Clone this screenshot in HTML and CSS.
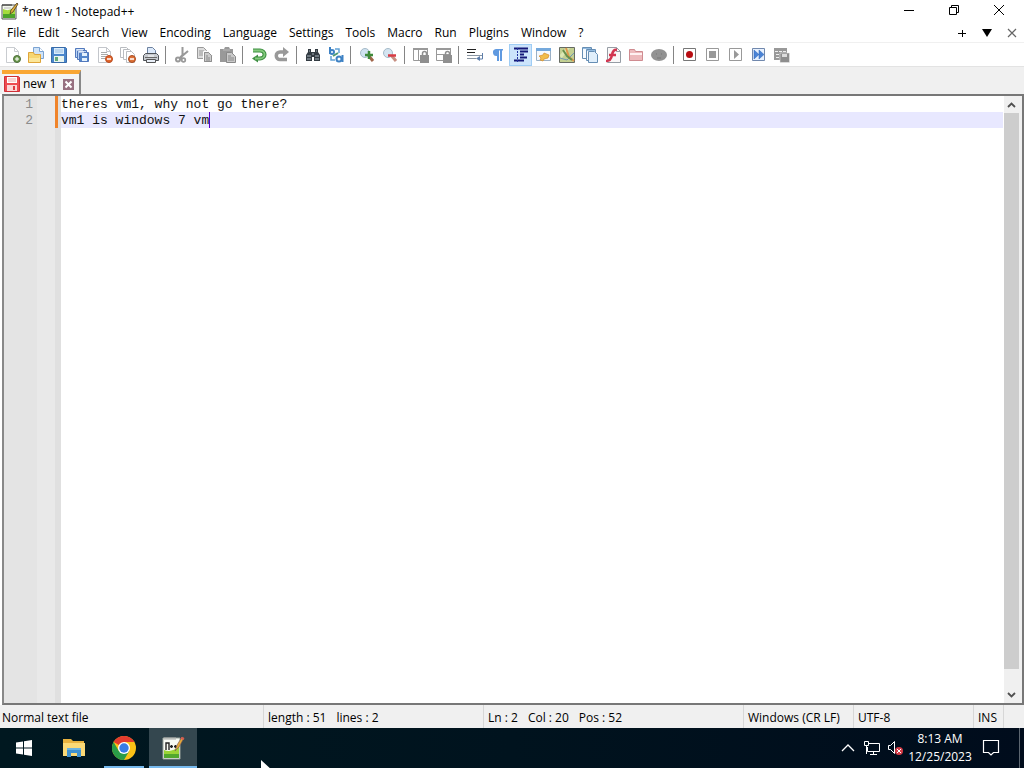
FILE: index.html
```
<!DOCTYPE html>
<html lang="en">
<head>
    <meta charset="UTF-8">
    <meta name="viewport" content="width=device-width, initial-scale=1.0">
    <title>*new 1 - Notepad++</title>
    <link rel="stylesheet" href="styles.css">
</head>
<body>
    <div class="window">
        <header class="titlebar">
            <svg class="app-icon" width="18" height="18" viewBox="0 0 18 18"><path d="M1 3h14v14H1z" fill="#f4f8ee" stroke="#555"/><path d="M2 7q6 3 12-2v11H2z" fill="#a5dc3c"/><path d="M2 12h12v4H2z" fill="#4da32a"/><path d="M2 2v2M4 2v2M6 2v2M8 2v2M10 2v2" stroke="#333"/><path d="M3 6h7" stroke="#bbb"/><path d="M9 12l1-4 6-7 1 1-5 8z" fill="#e5b23c" stroke="#4b3b20" stroke-width=".8"/></svg>
            <span class="title">*new 1 - Notepad++</span>
            <div class="window-buttons">
                <button aria-label="Minimize"><svg width="12" height="12" viewBox="0 0 12 12"><path d="M1 6.500h10" stroke="#000"/></svg></button>
                <button aria-label="Restore"><svg width="12" height="12" viewBox="0 0 12 12"><path d="M1.500 3.500h7v7h-7zM3.500 3.500v-2h7v7h-2" fill="none" stroke="#000"/></svg></button>
                <button aria-label="Close"><svg width="12" height="12" viewBox="0 0 12 12"><path d="M1 1l10 10M11 1L1 11" stroke="#000"/></svg></button>
            </div>
        </header>

        <nav class="menubar">
            <button>File</button>
            <button>Edit</button>
            <button>Search</button>
            <button>View</button>
            <button>Encoding</button>
            <button>Language</button>
            <button>Settings</button>
            <button>Tools</button>
            <button>Macro</button>
            <button>Run</button>
            <button>Plugins</button>
            <button>Window</button>
            <button>?</button>
            <div class="menu-right">
                <button aria-label="New tab"><svg width="10" height="10" viewBox="0 0 10 10"><path d="M1 5.500h8M5.500 2v7" stroke="#000"/></svg></button>
                <button aria-label="Tab list"><svg width="10" height="10" viewBox="0 0 10 10"><path d="M0 1h10L5 9z"/></svg></button>
                <button aria-label="Close tab"><svg width="10" height="10" viewBox="0 0 10 10"><path d="M1 1l8 8M9 1L1 9" stroke="#666" stroke-width="1.200"/></svg></button>
            </div>
        </nav>

        <div class="toolbar">
            <button aria-label="New"><svg viewBox="0 0 16 16"><path d="M1.500 .5h8l4 4v11h-12z" fill="#fff" stroke="#c9ccd0"/><path d="M9.500 .5v4h4" fill="none" stroke="#c9ccd0"/><circle cx="12" cy="12" r="3.500" fill="#6b9a4d" stroke="#4d6e3a"/><path d="M10 12h4M12 10v4" stroke="#fff"/></svg></button>
            <button aria-label="Open"><svg viewBox="0 0 16 16"><path d="M5.500 .5h6l4 4v7h-10z" fill="#cfe3f8" stroke="#7ba3d2"/><path d="M11.500 .5v4h4" fill="#fff" stroke="#7ba3d2"/><path d="M.5 5.500h5l1 2h6v8H.5z" fill="#f6d672" stroke="#dfa53a"/><path d="M1 11h10l1-2v6H1z" fill="#fbe69a"/></svg></button>
            <button aria-label="Save"><svg viewBox="0 0 16 16"><path d="M.5 .5h14l1 1v14H.5z" fill="#4b87cc" stroke="#376ba9"/><path d="M3 1h10v6H3z" fill="#d9ecfb"/><path d="M4 3h8M4 5h8" stroke="#99bde0"/><path d="M3 9h10v6H3z" fill="#eaf5ef"/><path d="M4 10h3v4H4z" fill="#62a879"/></svg></button>
            <button aria-label="Save All"><svg viewBox="0 0 16 16"><g fill="#b9d3f3" stroke="#5279bd"><path d="M1.500 1.500h9v9h-9z"/><path d="M3.500 3.500h9v9h-9z"/><path d="M5.500 5.500h9v9h-9z" fill="#5587cb"/></g><path d="M8 6h5v3H8zM8 11h5v3H8z" fill="#e5f2fc"/><path d="M3 3h6M5 5h5" stroke="#fff"/></svg></button>
            <button aria-label="Close"><svg viewBox="0 0 16 16"><path d="M1.500 .5h8l4 4v11h-12z" fill="#fff" stroke="#c3c6cb"/><path d="M9.500 .5v4h4" fill="none" stroke="#c3c6cb"/><path d="M4 5.500h6M4 7.500h7M4 9.500h5M4 11.500h4" stroke="#aaa"/><circle cx="12" cy="12" r="3.500" fill="#e2662d" stroke="#b94c20"/><path d="M10 12h4" stroke="#fff" stroke-width="1.500"/></svg></button>
            <button aria-label="Close All"><svg viewBox="0 0 16 16"><g fill="#fff" stroke="#b9bcc0"><path d="M.5 .5h6l2 2v8h-8z"/><path d="M3.500 2.500h6l2 2v8h-8z"/><path d="M6.500 4.500h5l3 3v8h-8z"/></g><circle cx="12" cy="12" r="3.500" fill="#dd7137" stroke="#a84b20"/><path d="M10 12h4" stroke="#fff" stroke-width="1.500"/></svg></button>
            <button aria-label="Print"><svg viewBox="0 0 16 16"><path d="M4.500 7V.5h5l3 3V7z" fill="#dce9fa" stroke="#6d82a0"/><path d="M.5 8.500l2-2h11l2 2v5H.5z" fill="#c6cacf" stroke="#4f5358"/><path d="M2 10.500h12" stroke="#666"/><path d="M3.500 12.500h9v3h-9z" fill="#e8eef7" stroke="#555"/><path d="M5 9h6" stroke="#fff"/></svg></button>
            <i class="separator"></i>
            <button aria-label="Cut" disabled><svg viewBox="0 0 16 16"><path d="M8.500 0v8L5 12M14 4L7 10l2 3" fill="none" stroke="#999" stroke-width="2"/><circle cx="4" cy="12.500" r="2" fill="#fff" stroke="#999" stroke-width="2"/><circle cx="9.500" cy="13" r="1.800" fill="#fff" stroke="#999" stroke-width="1.700"/></svg></button>
            <button aria-label="Copy" disabled><svg viewBox="0 0 16 16"><path d="M.5 .5h6l3 3v8h-9z" fill="#ddd" stroke="#999"/><path d="M2 4h5M2 6h5M2 8h4" stroke="#999"/><path d="M6.500 4.500h5l4 4v7h-9z" fill="#aaa" stroke="#fff"/><path d="M7.500 5.500h4l3 3v6h-7z" fill="#ccc" stroke="#8e8e8e"/><path d="M9 9h2M9 11h4M9 13h4" stroke="#888"/></svg></button>
            <button aria-label="Paste" disabled><svg viewBox="0 0 16 16"><path d="M0 2h4l1-2h4l1 2h3v13H0z" fill="#999"/><path d="M3 3h7" stroke="#bbb"/><path d="M6.500 5.500h5l4 4v6h-9z" fill="#c9c9c9" stroke="#888"/><path d="M8 9h3M8 11h6M8 13h6" stroke="#888"/></svg></button>
            <i class="separator"></i>
            <button aria-label="Undo"><svg viewBox="0 0 16 16"><path d="M2 3.500h7a4 3.500 0 0 1 0 8H6" fill="none" stroke="#3f8f43" stroke-width="4"/><path d="M7 7.500v8L1 11.500z" fill="#3f8f43"/><path d="M2 3.500h7a4 3.500 0 0 1 0 8H4" fill="none" stroke="#83ca7c" stroke-width="1.800"/></svg></button>
            <button aria-label="Redo" disabled><svg viewBox="0 0 16 16"><path d="M11 5H6a3.500 3.500 0 0 0 0 7.500h7" fill="none" stroke="#999" stroke-width="3.500"/><path d="M9 0l6 5-6 5z" fill="#999"/></svg></button>
            <i class="separator"></i>
            <button aria-label="Find"><svg viewBox="0 0 16 16"><path d="M3 2h3v3h4V2h3v3l2 3v6H9v-4H7v4H1V8l2-3z" fill="#333b42"/><path d="M2 9h4M10 9h4M2 12h4M10 12h4M7 7h2M4 4h1M11 4h1" stroke="#a9b5bd"/></svg></button>
            <button aria-label="Replace"><svg viewBox="0 0 16 16"><g fill="none" stroke="#3e82c4" stroke-width="2"><path d="M2 0v7"/><circle cx="4" cy="5" r="2"/><circle cx="11" cy="12" r="2.500"/><path d="M14.500 8v7"/></g><path d="M7 2h4v4M3 9v4h4" fill="none" stroke="#62a2d6" stroke-width="1.500"/><path d="M5 9l5-3" stroke="#4e9b72" stroke-width="2"/></svg></button>
            <i class="separator"></i>
            <button aria-label="Zoom In"><svg viewBox="0 0 16 16"><path d="M9 8l5 6" stroke="#a1664b" stroke-width="3"/><circle cx="6" cy="6" r="4.500" fill="#cfe2f0" stroke="#a5bac8"/><path d="M6 8h8M10 4v8" stroke="#3e8a3a" stroke-width="2.500"/></svg></button>
            <button aria-label="Zoom Out"><svg viewBox="0 0 16 16"><path d="M9 8l5 6" stroke="#c79083" stroke-width="3"/><circle cx="6" cy="6" r="4.500" fill="#d4e5f1" stroke="#a5bac8"/><path d="M6 8.500h8" stroke="#d83b45" stroke-width="2.500"/></svg></button>
            <i class="separator"></i>
            <button aria-label="Synchronize Vertical Scrolling" disabled><svg viewBox="0 0 16 16"><path d="M.5 1.500h14v12H.5zM5.500 2v11" fill="#fff" stroke="#999"/><path d="M0 2h15" stroke="#999" stroke-width="2"/><path d="M7 8h9v8H7z" fill="#8f8f8f"/><path d="M9.500 9V6.500a2 2 0 0 1 4 0V9" fill="none" stroke="#8f8f8f" stroke-width="1.500"/></svg></button>
            <button aria-label="Synchronize Horizontal Scrolling" disabled><svg viewBox="0 0 16 16"><path d="M.5 1.500h14v12H.5zM1 7.500h14" fill="#fff" stroke="#999"/><path d="M0 2h15" stroke="#999" stroke-width="2"/><path d="M7 8h9v8H7z" fill="#8f8f8f"/><path d="M9.500 9V6.500a2 2 0 0 1 4 0V9" fill="none" stroke="#8f8f8f" stroke-width="1.500"/></svg></button>
            <i class="separator"></i>
            <button aria-label="Word wrap"><svg viewBox="0 0 16 16"><path d="M0 2.500h9M0 5.500h8" stroke="#222"/><path d="M0 8.500h15M0 11.500h9" stroke="#8995a2"/><path d="M15.500 6v6H12" fill="none" stroke="#5d7eab"/><path d="M13 9v5l-4-2.500z" fill="#5d7eab"/></svg></button>
            <button aria-label="Show All Characters"><svg viewBox="0 0 16 16"><path d="M6 2h7v1.500h-1V14h-2V3.500H9V14H7V9A3.500 3.500 0 0 1 6 2z" fill="#609ae0"/></svg></button>
            <button class="pressed" aria-label="Show Indent Guide"><svg viewBox="0 0 16 16"><path d="M1 1.500h14M7 4.500h8M7 7.500h4M7 10.500h7M1 13.500h10" stroke="#151878" stroke-width="2"/><path d="M4.500 1v15" stroke="#2434a0" stroke-dasharray="2 1"/></svg></button>
            <button aria-label="User Defined Language"><svg viewBox="0 0 16 16"><path d="M.5 1.500h14v12H.5z" fill="#f5f9fd" stroke="#9bb0c5"/><path d="M0 2.500h15" stroke="#75a9dc" stroke-width="3"/><path d="M3 9l4-1 1-2 5 2-1 3-4 1-1 2-3-1 1-2z" fill="#f1bd4b" stroke="#d68c2b" stroke-width=".7"/></svg></button>
            <button aria-label="Document Map"><svg viewBox="0 0 16 16"><path d="M.5 .5h15v15H.5z" fill="#c3d092" stroke="#666b63"/><path d="M1 8l6-7h4L2 12z" fill="#dce8b5"/><path d="M7 1l3 9 5 4" fill="none" stroke="#df984c" stroke-width="2"/><path d="M1 11l7 2 7-7" stroke="#7197b4" fill="none"/><path d="M4 3l4 6 5 4" fill="none" stroke="#688f4d" stroke-width="2"/></svg></button>
            <button aria-label="Document List"><svg viewBox="0 0 16 16"><g fill="#f5faff" stroke="#668eb4"><path d="M.5 .5h9v11h-9z"/><path d="M4.500 2.500h9v11h-9z"/><path d="M6.500 4.500h6l3 3v8h-9z" fill="#e1effb"/></g><path d="M1 1.500h8M5 3.500h8" stroke="#93bbe0"/></svg></button>
            <button aria-label="Function List"><svg viewBox="0 0 16 16"><path d="M2.500 .5h9l4 4v11h-13z" fill="#faf8f8" stroke="#969da5"/><path d="M11.500 .5v4h4" fill="none" stroke="#969da5"/><path d="M12 3q-4-1-5 5-1 6-6 6M4 8h7" fill="none" stroke="#d23650" stroke-width="2.500"/></svg></button>
            <button aria-label="Folder as Workspace"><svg viewBox="0 0 16 16"><path d="M1.500 2.500h5l1 2h7v9h-13z" fill="#edbabc" stroke="#cf8b90"/><path d="M2 7h12" stroke="#fff1f1" stroke-width="2"/></svg></button>
            <button aria-label="Monitoring" disabled><svg viewBox="0 0 16 16"><ellipse cx="8" cy="8" rx="8" ry="6" fill="#929292"/><path d="M5 7h1M10 7h1M6 11h4" stroke="#777"/></svg></button>
            <i class="separator"></i>
            <button aria-label="Start Recording"><svg viewBox="0 0 16 16"><path d="M1.500 1.500h12v12h-12z" fill="#fff" stroke="#777"/><circle cx="7.500" cy="7.500" r="3.500" fill="#b80d12"/></svg></button>
            <button aria-label="Stop Recording" disabled><svg viewBox="0 0 16 16"><path d="M1.500 1.500h12v12h-12z" fill="#fff" stroke="#999"/><path d="M4 4h7v7H4z" fill="#999"/></svg></button>
            <button aria-label="Playback" disabled><svg viewBox="0 0 16 16"><path d="M1.500 1.500h12v12h-12z" fill="#fff" stroke="#999"/><path d="M6 3l5 4.500L6 12z" fill="#999"/></svg></button>
            <button aria-label="Run a Macro Multiple Times"><svg viewBox="0 0 16 16"><path d="M1.500 1.500h12v12h-12z" fill="#e7f1ff" stroke="#7188ad"/><path d="M3 3l5 4.500L3 12zM8 3l5 4.500L8 12z" fill="#4a83d7" stroke="#2e66b5" stroke-width=".5"/></svg></button>
            <button aria-label="Save Recorded Macro" disabled><svg viewBox="0 0 16 16"><path d="M0 1h13v12H0z" fill="#999"/><path d="M1 4.500h11M2 7.500h4M2 10.500h4" stroke="#eee" stroke-dasharray="3 1"/><path d="M6 6h9.500v9.500H6z" fill="#8e8e8e" stroke="#eee" stroke-width=".5"/><path d="M8 7h5v3H8z" fill="#ddd"/></svg></button>
        </div>

        <div class="tabbar">
            <div class="tab">
                <svg width="16" height="16" viewBox="0 0 16 16"><path d="M.5 .5h14l1 1v14H.5z" fill="#ee4b50" stroke="#cf3037"/><path d="M3 1h10v6H3z" fill="#fff"/><path d="M4 3h8M4 5h8" stroke="#f1a6a6"/><path d="M3 9h10v6H3z" fill="#fbd6d6"/><path d="M9 10h2v4H9z" fill="#dd3940"/></svg>
                <span>new 1</span>
                <button aria-label="Close new 1"><svg width="11" height="11" viewBox="0 0 11 11"><path d="M0 0h11v11H0z" fill="#977080"/><path d="M2.500 2.500l6 6M8.500 2.500l-6 6" stroke="#fff" stroke-width="2"/></svg></button>
            </div>
        </div>

        <main class="editor">
            <div class="line-numbers"><div>1</div><div>2</div></div>
            <div class="bookmarks"></div>
            <div class="changes"></div>
            <div class="text-area">
                <textarea aria-label="new 1" spellcheck="false">theres vm1, why not go there?
vm1 is windows 7 vm</textarea>
                <span class="caret"></span>
            </div>
            <div class="scrollbar">
                <button aria-label="Scroll up"><svg width="9" height="6" viewBox="0 0 9 6"><path d="M1 5l3.500-3.500L8 5" fill="none" stroke="#505050" stroke-width="1.800"/></svg></button>
                <div class="track"><div class="thumb"></div></div>
                <button aria-label="Scroll down"><svg width="9" height="6" viewBox="0 0 9 6"><path d="M1 1l3.500 3.500L8 1" fill="none" stroke="#505050" stroke-width="1.800"/></svg></button>
            </div>
        </main>

        <footer class="statusbar">
            <div class="doc-type">Normal text file</div>
            <div class="doc-size"><span>length : 51</span><span>lines : 2</span></div>
            <div class="position"><span>Ln : 2</span><span>Col : 20</span><span>Pos : 52</span></div>
            <div class="eol">Windows (CR LF)</div>
            <div class="charset">UTF-8</div>
            <div class="typing-mode">INS</div>
            <div class="grip"></div>
        </footer>
    </div>

    <div class="taskbar">
        <button class="task" aria-label="Start"><svg width="16" height="16" viewBox="0 0 16 16"><path d="M0 2.500l7-1v6H0zM8 1.300L16 0v7.500H8zM0 8.500h7v6l-7-1zM8 8.500h8V16l-8-1.200z" fill="#fff"/></svg></button>
        <button class="task" aria-label="File Explorer"><svg width="22" height="20" viewBox="0 0 22 20"><path d="M0 1h8l2 2h11v15H0z" fill="#e8b23f"/><path d="M0 5h22v13H0z" fill="#fbd976"/><path d="M4 10h14v9h-4v-4H8v4H4z" fill="#3f91cf"/><path d="M4 10h14v2H4z" fill="#6bb2e0"/></svg></button>
        <button class="task running" aria-label="Google Chrome"><svg width="24" height="24" viewBox="0 0 24 24"><circle cx="12" cy="12" r="12" fill="#fbc116"/><path d="M12 12L1.600 6A12 12 0 0 1 22.400 6H12z" fill="#e33b2e"/><path d="M1.600 6A12 12 0 0 0 12 24l5.200-9L12 12 6.800 15z" fill="#2a9c47"/><circle cx="12" cy="12" r="6" fill="#fff"/><circle cx="12" cy="12" r="4.700" fill="#377ce5"/></svg></button>
        <button class="task active" aria-label="Notepad++"><svg width="24" height="24" viewBox="0 0 24 24"><path d="M2 2h17v21H2z" fill="#f7faf4" stroke="#9aa39c"/><path d="M3 14q8 3 15-4v12H3z" fill="#9bd435"/><path d="M3 18h15v4H3z" fill="#52a82c"/><path d="M4 1v3M6 1v3M8 1v3M10 1v3M12 1v3M14 1v3" stroke="#aaa"/><path d="M5 14V7h3v7M9 10.500h3M10.500 9v3M13 10.500h3M14.500 9v3" fill="none" stroke="#222" stroke-width="1.400"/><path d="M14 15l2-6 5-8 2 1-5 9z" fill="#e5a93a" stroke="#755" stroke-width=".6"/><path d="M20 2l3 1" stroke="#d75a50" stroke-width="2"/></svg></button>
        <div class="tray">
            <button aria-label="Show hidden icons"><svg width="14" height="8" viewBox="0 0 14 8"><path d="M1 7l6-6 6 6" fill="none" stroke="#fff" stroke-width="1.300"/></svg></button>
            <button aria-label="Network"><svg width="18" height="16" viewBox="0 0 18 16"><path d="M5 3.500h11.500v8H4.500V7M10.500 12v2.500M7 14.500h7" fill="none" stroke="#fff"/><path d="M1.500 1.500h4v4h-4zM3.500 6v8" fill="#00121e" stroke="#fff"/></svg></button>
            <button aria-label="Speakers"><svg width="18" height="16" viewBox="0 0 18 16"><path d="M1.500 5.500h2l4-4v12l-4-4h-2z" fill="none" stroke="#fff"/><circle cx="12" cy="11" r="4" fill="#d43c47"/><path d="M10 9l4 4M14 9l-4 4" stroke="#fff"/></svg></button>
            <button class="clock"><span>8:13 AM</span><span>12/25/2023</span></button>
            <button aria-label="Notifications"><svg width="18" height="18" viewBox="0 0 18 18"><path d="M1.500 1.500h15v12h-5L9 16l-2.500-2.500h-5z" fill="none" stroke="#fff" stroke-width="1.200"/></svg></button>
        </div>
        <div class="show-desktop"></div>
        <svg class="cursor" width="12" height="19" viewBox="0 0 12 19"><path d="M0 0v16l4-4 3 6 2-1-3-6h6z" fill="#fff"/></svg>
    </div>
</body>
</html>
```
FILE: styles.css
```
* {box-sizing: border-box;}
body {margin: 0; height: 100vh; display: flex; flex-direction: column; overflow: hidden; font-family: "Open Sans", "Noto Sans", sans-serif; font-size: 12px; line-height: 16px; color: #000; background: #fff;}
button {display: flex; align-items: center; justify-content: center; margin: 0; padding: 0; border: 0; background: none; font: inherit; color: inherit;}
svg {display: block; flex: none;}
.window {flex: 1; min-height: 0; display: flex; flex-direction: column;}

.titlebar {display: flex; align-items: center; height: 24px; padding-left: 1px;}
.app-icon {margin-bottom: 2px;}
.title {margin-left: 3px; flex: 1;}
.window-buttons {display: flex; align-self: flex-start; margin-right: 3px;}
.window-buttons button {width: 45px; height: 20px;}

.menubar {display: flex; align-items: center; height: 18px; padding: 0 7px; gap: 12px; white-space: nowrap;}
.menu-right {display: flex; margin-left: auto; gap: 15px;}

.toolbar {display: flex; align-items: center; height: 25px; padding-left: 1px; border-top: 1px solid #f0f0f0; border-bottom: 1px solid #e3e3e3;}
.toolbar button {width: 23px; height: 22px;}
.toolbar svg {width: 16px; height: 16px;}
.toolbar .pressed {background: #cce4fb; border: 1px solid #9fcdf5;}
.separator {width: 8px; height: 18px; background: linear-gradient(#858585, #858585) 3px 0 / 1px 100% no-repeat;}

.tabbar {display: flex; height: 27px; padding: 3px 2px 0; background: #f0f0f0;}
.tab {display: flex; align-items: center; gap: 3px; width: 79px; padding-left: 2px; border-top: 4px solid #f9a633; border-right: 2px solid #888; background: #f4f4f4; white-space: nowrap;}
.tab button {margin-left: auto; margin-right: 5px;}

.editor {flex: 1; min-height: 0; display: flex; margin-left: 2px; border: 2px solid #777; border-left-color: #888; background: #fff; font-family: "Liberation Mono", monospace; font-size: 13px; line-height: 16px;}
.line-numbers {width: 33px; padding: 1px 4px 0 0; background: #e4e4e4; color: #8c8c8c; text-align: right;}
.bookmarks {width: 18px; background: #e9e9e9;}
.changes {width: 6px; background: linear-gradient(#f0842a, #f0842a) 0 0 / 3px 32px no-repeat #e0e0e0;}
.text-area {position: relative; flex: 1; display: flex;}
.text-area textarea {flex: 1; width: 100%; margin: 0; padding: 1px 0 0; border: 0; outline: 0; resize: none; overflow: hidden; background: linear-gradient(#e8e8ff, #e8e8ff) 0 16px / 100% 16px no-repeat #fff; font: inherit; color: #111;}
.caret {position: absolute; top: 16px; left: 19ch; width: 1px; height: 16px; background: #5a00c8;}
.scrollbar {display: flex; flex-direction: column; width: 19px; padding-right: 3px; border-left: 1px solid #fff; background: #f0f0f0;}
.scrollbar button {height: 17px;}
.track {flex: 1;}
.thumb {height: 97%; background: #cdcdcd;}

.statusbar {display: flex; height: 23px; background: #f0f0f0; line-height: 25px; white-space: nowrap;}
.statusbar div {display: flex; gap: 10px; padding-left: 4px; border-right: 1px solid #d7d7d7;}
.statusbar .doc-type {flex: 1; padding-left: 2px;}
.doc-size {width: 220px;}
.position {width: 260px;}
.eol {width: 110px;}
.charset {width: 120px;}
.typing-mode {width: 30px;}
.statusbar .grip {width: 20px; border: 0;}

.taskbar {position: relative; display: flex; height: 40px; overflow: hidden; background: linear-gradient(90deg, #001820, #00131e 50%, #000c1c); color: #fff;}
.task {width: 48px;}
.task + .task {margin-left: 2px;}
.running {background: linear-gradient(#76b9ed, #76b9ed) center bottom / 40px 2px no-repeat;}
.task.active {margin-left: 1px; background: #34474f; border-bottom: 2px solid #76b9ed; padding-top: 2px;}
.tray {display: flex; align-items: center; margin-left: auto;}
.tray button {width: 24px; height: 40px;}
.tray .clock {flex-direction: column; width: 64px; line-height: 18px;}
.tray .clock + button {width: 38px;}
.show-desktop {width: 5px; margin-left: 9px; border-left: 1px solid #5c6670;}
.cursor {position: absolute; top: 32px; left: 261px;}
```
